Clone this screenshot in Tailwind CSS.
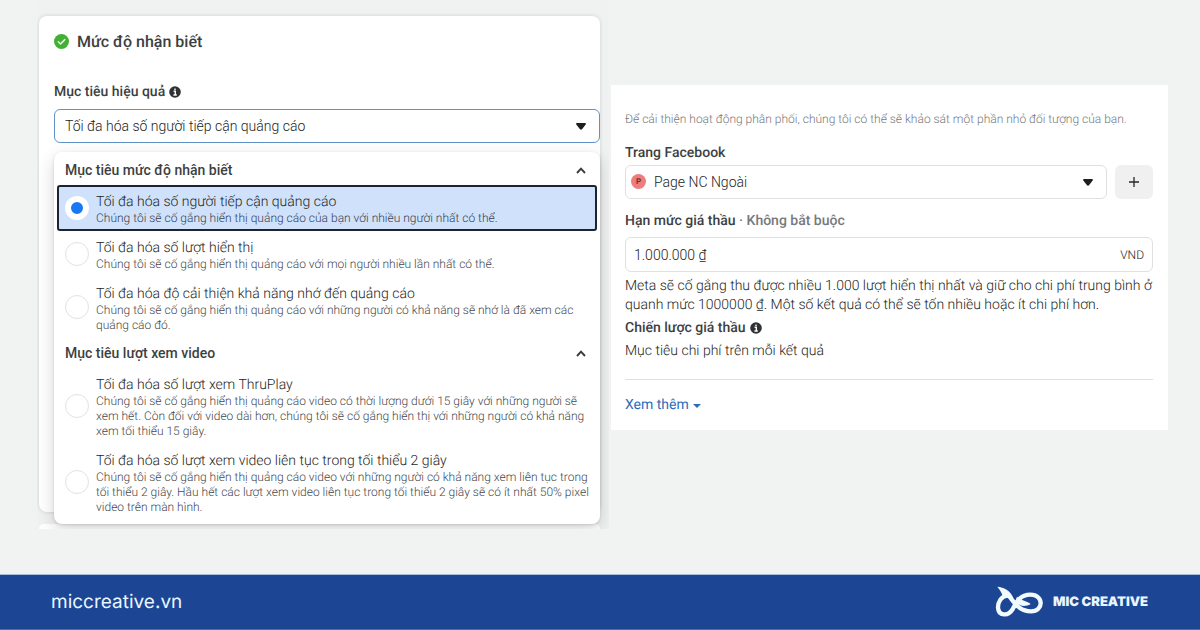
<!DOCTYPE html>
<html lang="vi">
<head>
<meta charset="utf-8">
<meta name="viewport" content="width=device-width, initial-scale=1">
<title>MIC Creative</title>
<script src="https://cdn.jsdelivr.net/npm/@tailwindcss/browser@4"></script>
</head>
<body class="flex min-h-screen flex-col bg-[#f0f3f2] font-[Roboto,'Noto_Sans',sans-serif] text-sm text-[#3d3f42] [text-rendering:geometricPrecision]">
<main class="grid flex-1 grid-cols-[572fr_557fr] items-start gap-0.5 pr-8 pl-[37px]">

  <section class="min-w-0 overflow-hidden bg-[#f0f2f2] pt-4 pr-[9px] pl-0.5">
    <div class="flow-root rounded-lg bg-white pt-4 pl-[15px] shadow-[0_0_4px_rgba(0,0,0,0.14)]">
      <h2 class="flex items-center gap-2 text-base leading-[19px] font-medium">
        <svg class="size-[15px]" viewBox="0 0 16 16" aria-hidden="true"><circle cx="8" cy="8" r="8" fill="#42b036"/><path d="M4.6 8.3l2.3 2.3 4.6-4.6" fill="none" stroke="#e4f9dc" stroke-width="1.6" stroke-linecap="round" stroke-linejoin="round"/></svg>
        Mức độ nhận biết
      </h2>
      <label for="goal" class="mt-8 flex items-center gap-1 leading-[18px] font-medium">Mục tiêu hiệu quả
        <svg class="size-3" viewBox="0 0 12 12" aria-hidden="true"><circle cx="6" cy="6" r="5.8" fill="#2f3134"/><path d="M6 2.4v1.7M4.6 5.2H6.3V9M4.4 9h3.4" fill="none" stroke="#fff" stroke-width="1.4"/></svg>
      </label>
      <div class="relative mt-2">
        <select id="goal" class="block h-[34px] w-full appearance-none rounded-md border border-[#5f93c8] bg-white px-2.5 font-light text-[#1c1e22] outline-none">
          <option>Tối đa hóa số người tiếp cận quảng cáo</option>
        </select>
        <svg class="pointer-events-none absolute top-3.5 right-3.5 h-[7px] w-[10px]" viewBox="0 0 10 7" aria-hidden="true"><path d="M1 0h8c.9 0 1.2.9.7 1.5L6 6.2c-.5.6-1.5.6-2 0L.3 1.5C-.2.9.1 0 1 0z" fill="#1c1e21"/></svg>
      </div>

      <div class="relative z-10 mt-[9px] -mb-3 rounded-lg bg-white pt-[3px] pb-1 shadow-[0_6px_18px_rgba(0,0,0,0.16),0_1px_3px_rgba(0,0,0,0.14)]">
        <fieldset>
          <legend class="w-full"><button type="button" class="flex h-[30px] w-full items-center justify-between pr-3.5 pl-[11px] font-medium">Mục tiêu mức độ nhận biết
            <svg class="h-[7px] w-[10px]" viewBox="0 0 10 7" aria-hidden="true"><path d="M1 6l4-4.3L9 6" fill="none" stroke="#3a3c40" stroke-width="1.9"/></svg></button></legend>
          <label class="mx-[3px] flex items-center gap-[7px] rounded-[3px] bg-[#d0e2fb] pt-2 pb-[5px] pl-2 font-light whitespace-nowrap outline-2 -outline-offset-2 outline-[#1d2430]">
            <input type="radio" name="g" checked class="mb-1 size-6 shrink-0 appearance-none rounded-full border-[6px] border-white bg-[#1877f2]">
            <span><span class="block leading-[18px] text-[#1c1e22]">Tối đa hóa số người tiếp cận quảng cáo</span><span class="block text-xs leading-[15px] text-[#364050]">Chúng tôi sẽ cố gắng hiển thị quảng cáo của bạn với nhiều người nhất có thể.</span></span>
          </label>
          <label class="mx-[3px] flex items-center gap-[7px] pt-2 pb-[5px] pl-2 font-light whitespace-nowrap">
            <input type="radio" name="g" class="mb-1 size-6 shrink-0 appearance-none rounded-full border border-[#e2e2e3]">
            <span><span class="block leading-[18px] text-[#1c1e22]">Tối đa hóa số lượt hiển thị</span><span class="block text-xs leading-[15px] text-[#45474b]">Chúng tôi sẽ cố gắng hiển thị quảng cáo với mọi người nhiều lần nhất có thể.</span></span>
          </label>
          <label class="mx-[3px] flex items-center gap-[7px] pt-2 pb-[5px] pl-2 font-light whitespace-nowrap">
            <input type="radio" name="g" class="mb-1 size-6 shrink-0 appearance-none rounded-full border border-[#e2e2e3]">
            <span><span class="block leading-[18px] text-[#1c1e22]">Tối đa hóa độ cải thiện khả năng nhớ đến quảng cáo</span><span class="block text-xs leading-[15px] text-[#45474b]">Chúng tôi sẽ cố gắng hiển thị quảng cáo với những người có khả năng sẽ nhớ là đã xem các<br>quảng cáo đó.</span></span>
          </label>
        </fieldset>
        <fieldset>
          <legend class="w-full"><button type="button" class="flex h-[30px] w-full items-center justify-between pr-3.5 pl-[11px] font-medium">Mục tiêu lượt xem video
            <svg class="h-[7px] w-[10px]" viewBox="0 0 10 7" aria-hidden="true"><path d="M1 6l4-4.3L9 6" fill="none" stroke="#3a3c40" stroke-width="1.9"/></svg></button></legend>
          <label class="mx-[3px] flex items-center gap-[7px] pt-2 pb-[5px] pl-2 font-light whitespace-nowrap">
            <input type="radio" name="g" class="mb-1 size-6 shrink-0 appearance-none rounded-full border border-[#e2e2e3]">
            <span><span class="block leading-[18px] text-[#1c1e22]">Tối đa hóa số lượt xem ThruPlay</span><span class="block text-xs leading-[15px] text-[#45474b]">Chúng tôi sẽ cố gắng hiển thị quảng cáo video có thời lượng dưới 15 giây với những người sẽ<br>xem hết. Còn đối với video dài hơn, chúng tôi sẽ cố gắng hiển thị với những người có khả năng<br>xem tối thiểu 15 giây.</span></span>
          </label>
          <label class="mx-[3px] flex items-center gap-[7px] pt-2 pb-[5px] pl-2 font-light whitespace-nowrap">
            <input type="radio" name="g" class="mb-1 size-6 shrink-0 appearance-none rounded-full border border-[#e2e2e3]">
            <span><span class="block leading-[18px] text-[#1c1e22]">Tối đa hóa số lượt xem video liên tục trong tối thiểu 2 giây</span><span class="block text-xs leading-[15px] text-[#45474b]">Chúng tôi sẽ cố gắng hiển thị quảng cáo video với những người có khả năng xem liên tục trong<br>tối thiểu 2 giây. Hầu hết các lượt xem video liên tục trong tối thiểu 2 giây sẽ có ít nhất 50% pixel<br>video trên màn hình.</span></span>
          </label>
        </fieldset>
      </div>
    </div>
    <div class="mt-3 h-[5px] rounded-t-lg bg-white"></div>
  </section>

  <section class="mt-[85px] min-w-0 bg-white pt-[25px] pr-[15px] pb-[15px] pl-3.5">
    <p class="text-xs leading-[18px] font-light text-[#75787b]">Để cải thiện hoạt động phân phối, chúng tôi có thể sẽ khảo sát một phần nhỏ đối tượng của bạn.</p>
    <label for="page" class="mt-4 block leading-[18px] font-medium">Trang Facebook</label>
    <div class="mt-[3px] flex gap-2">
      <div class="relative flex-1">
        <select id="page" class="block h-[34px] w-full appearance-none rounded-md border border-[#dfe0e1] bg-white px-7 font-light text-[#1c1e22]">
          <option>Page NC Ngoài</option>
        </select>
        <span class="pointer-events-none absolute top-[9px] left-1.5 flex size-[15px] items-center justify-center rounded-full bg-[#ec7e7c] text-[8px] font-bold text-[#7d2a2c]">P</span>
        <svg class="pointer-events-none absolute top-3.5 right-3.5 h-[7px] w-[10px]" viewBox="0 0 10 7" aria-hidden="true"><path d="M1 0h8c.9 0 1.2.9.7 1.5L6 6.2c-.5.6-1.5.6-2 0L.3 1.5C-.2.9.1 0 1 0z" fill="#1c1e21"/></svg>
      </div>
      <button type="button" aria-label="Thêm" class="flex h-[34px] w-[38px] items-center justify-center rounded-md bg-[#f0f0f1]">
        <svg class="size-2.5" viewBox="0 0 10 10" aria-hidden="true"><path d="M5 0v10M0 5h10" stroke="#25272a" stroke-width="1.3"/></svg>
      </button>
    </div>
    <label for="bid" class="mt-[13px] block leading-[18px] font-medium">Hạn mức giá thầu <span class="text-[#77797d]">· Không bắt buộc</span></label>
    <div class="mt-[7px] flex h-[35px] items-center rounded-md border border-[#dfe0e1] px-2 font-light text-[#1c1e22]">
      <input id="bid" type="text" value="1.000.000 ₫" class="min-w-0 flex-1 outline-none">
      <span class="text-xs">VND</span>
    </div>
    <p class="mt-[5px] leading-[19px] font-light whitespace-nowrap text-[#1c1e22]">Meta sẽ cố gắng thu được nhiều 1.000 lượt hiển thị nhất và giữ cho chi phí trung bình ở<br>quanh mức 1000000 ₫. Một số kết quả có thể sẽ tốn nhiều hoặc ít chi phí hơn.</p>
    <h3 class="mt-1 flex items-center gap-1 leading-[18px] font-medium">Chiến lược giá thầu
      <svg class="size-3" viewBox="0 0 12 12" aria-hidden="true"><circle cx="6" cy="6" r="5.8" fill="#2f3134"/><path d="M6 2.4v1.7M4.6 5.2H6.3V9M4.4 9h3.4" fill="none" stroke="#fff" stroke-width="1.4"/></svg>
    </h3>
    <p class="mt-[5px] leading-[19px] font-light text-[#1c1e22]">Mục tiêu chi phí trên mỗi kết quả</p>
    <hr class="mt-[18px] border-[#dfe0e1]">
    <a href="#" class="mt-4 flex items-center gap-1 leading-[19px] text-[#2b6cb8]">Xem thêm
      <svg class="h-1 w-2" viewBox="0 0 8 4" aria-hidden="true"><path d="M0 0h8L4 4z" fill="#2b6cb8"/></svg></a>
  </section>
</main>

<footer class="flex h-14 items-center justify-between border-t border-b border-t-[#a9bcdc] border-b-[#4a6db3] bg-[#1c4594] pr-[52px] pl-[51px] font-[Inter,sans-serif] text-[#e9f6ff]">
  <a href="#" class="text-[19px]">miccreative.vn</a>
  <div class="flex items-center gap-0.5">
    <svg class="h-11 w-16" viewBox="0 0 192 132" aria-hidden="true">
      <path d="M60 47C42 50 33 66 33 82C34 109 64 109 76 89C88 67 98 44 130 44C171 44 171 94 132 94C104 94 90 80 68 50" fill="none" stroke="#f0faff" stroke-width="13"/>
      <path d="M31 20C50 22 70 30 80 56L62 54L47 52C47 42 41 33 31 20z" fill="#f0faff"/>
      <path d="M90 50C102 63 122 62 131 72C114 82 98 79 84 66z" fill="#f0faff"/>
    </svg>
    <span class="text-[13px] font-black">MIC CREATIVE</span>
  </div>
</footer>
</body>
</html>
